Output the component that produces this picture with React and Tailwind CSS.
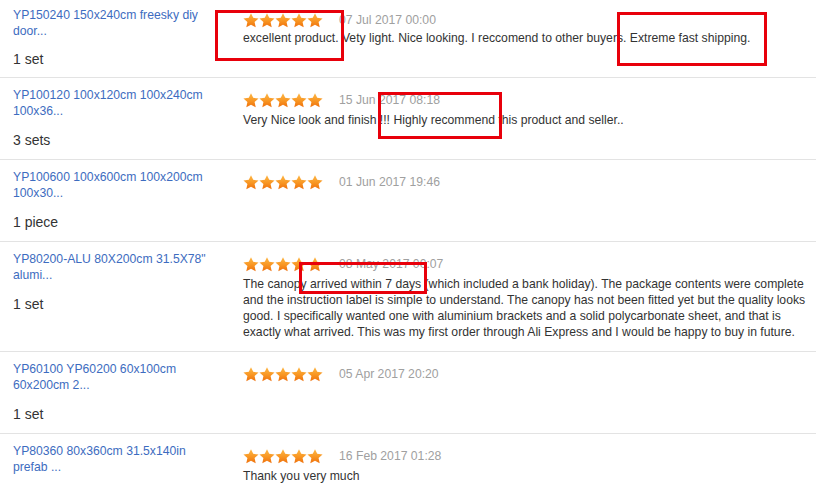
import React from 'react';

const reviews = [
    {
        title: 'YP150240 150x240cm freesky diy door...',
        qty: '1 set',
        date: '07 Jul 2017 00:00',
        text: 'excellent product. Vety light. Nice looking. I reccomend to other buyers. Extreme fast shipping.',
    },
    {
        title: 'YP100120 100x120cm 100x240cm 100x36...',
        qty: '3 sets',
        date: '15 Jun 2017 08:18',
        text: 'Very Nice look and finish !!! Highly recommend this product and seller..',
    },
    {
        title: 'YP100600 100x600cm 100x200cm 100x30...',
        qty: '1 piece',
        date: '01 Jun 2017 19:46',
        text: '',
    },
    {
        title: 'YP80200-ALU 80X200cm 31.5X78" alumi...',
        qty: '1 set',
        date: '08 May 2017 00:07',
        text: 'The canopy arrived within 7 days (which included a bank holiday). The package contents were complete and the instruction label is simple to understand. The canopy has not been fitted yet but the quality looks good. I specifically wanted one with aluminium brackets and a solid polycarbonate sheet, and that is exactly what arrived. This was my first order through Ali Express and I would be happy to buy in future.',
    },
    {
        title: 'YP60100 YP60200 60x100cm 60x200cm 2...',
        qty: '1 set',
        date: '05 Apr 2017 20:20',
        text: '',
    },
    {
        title: 'YP80360 80x360cm 31.5x140in prefab ...',
        qty: '1 set',
        date: '16 Feb 2017 01:28',
        text: 'Thank you very much',
    },
];

// red annotation boxes drawn over the screenshot
const marks = [
    'left-[215px] top-[10px] w-[129px] h-[51px]',
    'left-[617px] top-[12px] w-[150px] h-[54px]',
    'left-[378px] top-[92px] w-[124px] h-[47px]',
    'left-[299px] top-[262px] w-[128px] h-[32px]',
];

function Star({ id }) {
    return (
        <svg width="16" height="15" viewBox="0 0 24 23" className="block">
            <defs>
                <linearGradient id={id} x1="0" y1="0" x2="0" y2="1">
                    <stop offset="0%" stopColor="#fdb847" />
                    <stop offset="55%" stopColor="#f89522" />
                    <stop offset="100%" stopColor="#ee6f0c" />
                </linearGradient>
            </defs>
            <polygon
                points="12,0.3 15.4,7.4 23.6,8.3 17.5,13.9 19.2,22 12,17.9 4.8,22 6.5,13.9 0.4,8.3 8.6,7.4"
                fill={`url(#${id})`}
            />
        </svg>
    );
}

function Stars({ row }) {
    return (
        <div className="flex">
            {[0, 1, 2, 3, 4].map((i) => (
                <Star key={i} id={`st-${row}-${i}`} />
            ))}
        </div>
    );
}

export default function App() {
    return (
        <div className="relative w-[816px] h-[483px] overflow-hidden bg-white font-['Liberation_Sans',Arial,sans-serif]">
            <div className="-mt-[2px]">
                {reviews.map((r, idx) => (
                    <div key={idx} className="flex border-b border-[#e3e3e3]">
                        <div className={`w-[243px] shrink-0 pl-[13px] pt-[9px] ${idx === 0 ? 'pb-[9px]' : 'pb-[10px]'}`}>
                            <div className="w-[208px] text-[12.2px] leading-[16px] text-[#3d6cc0]">{r.title}</div>
                            <div className={`${idx === 0 ? 'mt-[11px]' : 'mt-[12px]'} text-[14px] leading-[18px] text-[#333]`}>{r.qty}</div>
                        </div>
                        <div className="w-[570px] pt-[13px] pb-[11px]">
                            <div className="flex items-center h-[18px]">
                                <Stars row={idx} />
                                <span className="ml-[16px] text-[12.2px] text-[#a0a0a0]">{r.date}</span>
                            </div>
                            {r.text && (
                                <p className={`${idx === 0 ? 'mt-[1px]' : 'mt-[3px]'} text-[12.2px] leading-[16px] text-[#333]`}>{r.text}</p>
                            )}
                        </div>
                    </div>
                ))}
            </div>

            {marks.map((m, i) => (
                <div key={i} className={`absolute border-[3px] border-[#e8000b] ${m}`} />
            ))}
        </div>
    );
}
